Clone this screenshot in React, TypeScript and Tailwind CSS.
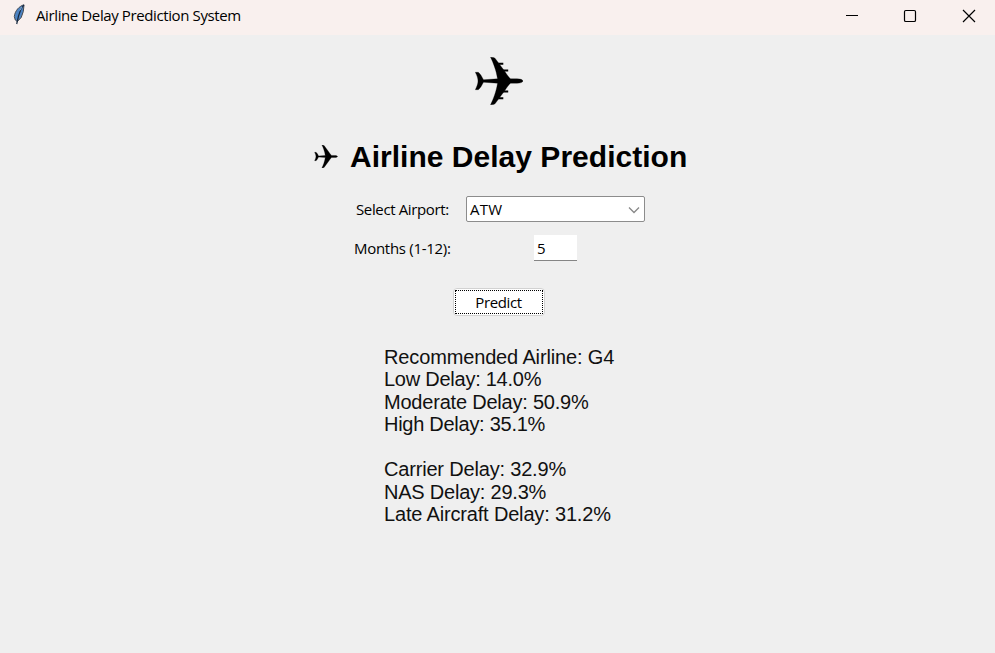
import { useState } from 'react';

const results = [
  { text: 'Recommended Airline: G4', tracking: 'tracking-[-0.14px]' },
  { text: 'Low Delay: 14.0%', tracking: 'tracking-[-0.25px]' },
  { text: 'Moderate Delay: 50.9%', tracking: 'tracking-[-0.21px]' },
  { text: 'High Delay: 35.1%', tracking: 'tracking-[-0.27px]' },
  { text: '', tracking: '' },
  { text: 'Carrier Delay: 32.9%', tracking: 'tracking-[-0.18px]' },
  { text: 'NAS Delay: 29.3%', tracking: 'tracking-[-0.22px]' },
  { text: 'Late Aircraft Delay: 31.2%', tracking: 'tracking-[-0.17px]' },
];

function Plane({ className, engines = false }: { className: string; engines?: boolean }) {
  return (
    <svg viewBox="0 0 48 48" className={className} fill="#000" stroke="#000" strokeLinejoin="round">
      <path d="M48 24C47.6 25.4 45.5 26.2 42 26.2H35.5C33.5 28 31.5 31 29.5 34L20 46.8Q18.5 48 15.5 47.8C18 43 21.5 34 22.5 26.2L8.5 25.2C7 28 5.5 31 3.3 32.7H.3C2 29.5 3 26.5 3 24C3 21.5 2 18.5 .3 15.3H3.3C5.5 17 7 20 8.5 22.8L22.5 21.8C21.5 14 18 5 15.5 .2Q18.5 0 20 1.2L29.5 14C31.5 17 33.5 20 35.5 21.8H42C45.5 21.8 47.6 22.6 48 24Z" />
      {engines && <path strokeWidth="0" d="M23 5.8H28.3V7.8H24ZM28 12.5H33.2V14.5H28.5ZM23 42.2H28.3V40.2H24ZM28 35.5H33.2V33.5H28.5Z" />}
    </svg>
  );
}

function Feather() {
  return (
    <svg viewBox="0 0 12 21" className="h-[21px] w-3">
      <path d="M11 .8C6.5 2 2 6.5 1.3 12.5L2.3 16L4.3 17.5L8.2 13.5L10.3 7.5Z" fill="#4c83c3" stroke="#46494e" strokeWidth="1" />
      <path d="M10.8 1L7.8 5.5L5.5 12L3.7 20" fill="none" stroke="#16283f" strokeWidth="1.2" />
      <path d="M9 3L6.8 6.5" stroke="#9bc3e8" strokeWidth=".8" />
    </svg>
  );
}

export default function App() {
  const [month, setMonth] = useState('5');
  return (
    <div className="flex h-[653px] w-[995px] flex-col overflow-hidden bg-[#efefef] font-['Open_Sans',sans-serif] text-black">
      <header className="flex h-[35px] shrink-0 bg-[#f9f0ee] pl-[13px]">
        <div className="pt-1"><Feather /></div>
        <h1 className="ml-[11px] grow whitespace-nowrap pt-[5px] text-[15px] leading-[21px] tracking-[-0.39px]">Airline Delay Prediction System</h1>
        <div className="flex w-[163px] items-start pt-[9px]">
          <svg viewBox="0 0 14 14" className="mr-[44px] ml-[13px] h-[14px] w-[14px]" fill="none" stroke="#000"><path d="M1 6.5H13" /></svg>
          <svg viewBox="0 0 14 14" className="h-[14px] w-[14px]" fill="none" stroke="#000" strokeWidth="1.2"><rect x="1.5" y="1.5" width="11" height="11" rx="1.3" /></svg>
          <svg viewBox="0 0 14 14" className="ml-[45px] h-[14px] w-[14px]" fill="none" stroke="#000" strokeWidth="1.2"><path d="M1 1L13 13M13 1L1 13" /></svg>
        </div>
      </header>

      <main className="flex flex-col">
        <div className="mt-[22px] ml-[475px]"><Plane engines className="h-12 w-12 stroke-[0.3]" /></div>
        <div className="mt-[34px] ml-[314px] flex h-9 items-center">
          <Plane className="mb-[2px] h-[23px] w-6 stroke-[0.6]" />
          <h2 className="ml-3 whitespace-nowrap font-['Liberation_Sans',Arial,sans-serif] text-[30px] leading-9 font-bold tracking-[0.02px]">Airline Delay Prediction</h2>
        </div>

        <div className="mt-[21px] ml-[356px] flex h-[26px] items-center">
          <label className="w-[110px] whitespace-nowrap text-[15px] leading-5 tracking-[-0.37px]">Select Airport:</label>
          <button className="flex h-[26px] w-[179px] items-center justify-between rounded-[2px] border border-[#8c8c8c] bg-white pr-[4px] pl-[3px] text-[15px] leading-5">
            <span className="tracking-[0.2px]">ATW</span>
            <svg viewBox="0 0 12 8" className="mt-px h-2 w-3" fill="none" stroke="#888" strokeWidth="1.3"><path d="M1 1.5L6 6.5L11 1.5" /></svg>
          </button>
        </div>

        <div className="mt-[13px] ml-[354px] flex h-[26px] items-center">
          <label className="w-[180px] whitespace-nowrap text-[15px] leading-5 tracking-[-0.29px]">Months (1-12):</label>
          <input
            value={month}
            onChange={(e) => setMonth(e.target.value)}
            className="h-[26px] w-[43px] border-b border-[#858585] bg-white pt-px pl-[3px] text-[15px] leading-5 outline-none"
          />
        </div>

        <div className="mt-[27px] ml-[453px] flex h-[28px] w-[92px] rounded-[4px] border border-[#d2d2d2] bg-white p-px">
          <button className="flex grow items-center justify-center border border-dotted border-black pr-px text-[15px] leading-5 tracking-[-0.4px]">Predict</button>
        </div>

        <div className="mt-[29.5px] ml-[384px] font-['Liberation_Sans',Arial,sans-serif] text-[20px] leading-[22.5px] text-[#111]">
          {results.map((r, i) => (
            <p key={i} className={`h-[22.5px] whitespace-nowrap ${r.tracking}`}>{r.text}</p>
          ))}
        </div>
      </main>
    </div>
  );
}
